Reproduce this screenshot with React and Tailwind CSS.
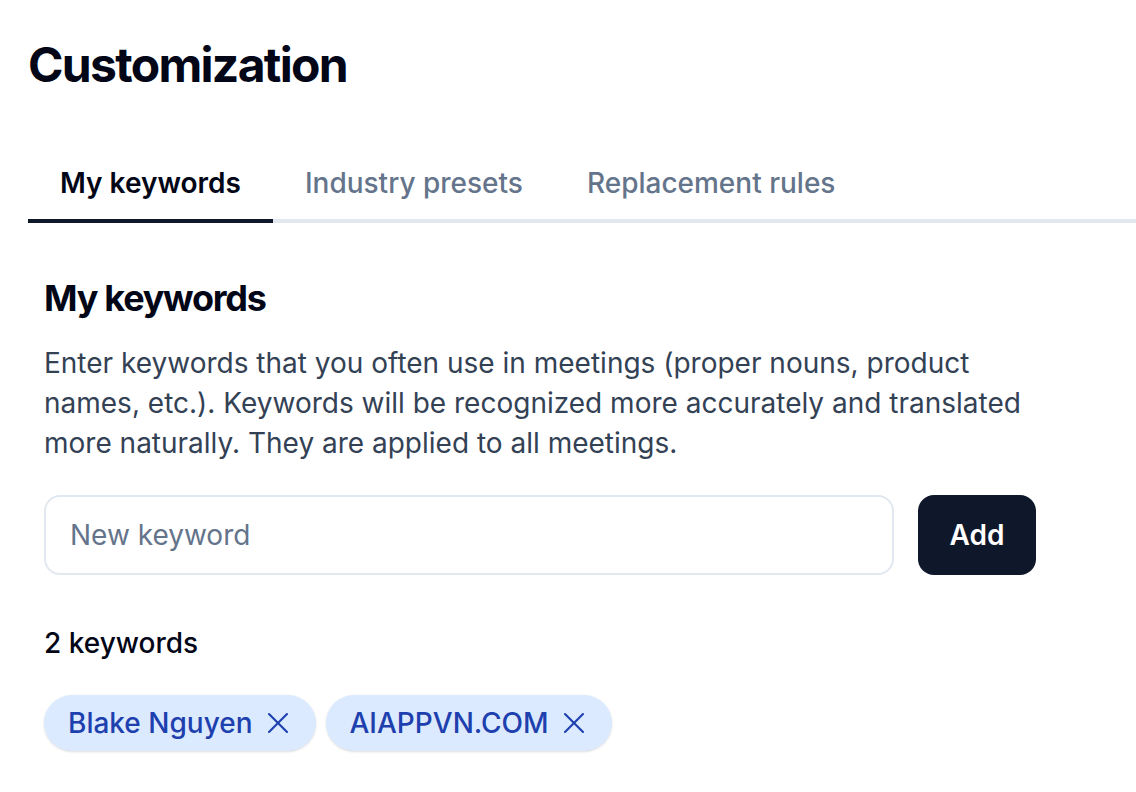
import { X } from "lucide-react";

const tabs = ["My keywords", "Industry presets", "Replacement rules"];
const keywords = ["Blake Nguyen", "AIAPPVN.COM"];

export default function App() {
  return (
    <div
      className="min-h-screen bg-white pl-[28px] pt-[41px]"
      style={{ fontFamily: "Inter, 'Noto Sans', sans-serif" }}
    >
      <h1 className="text-[48px] font-bold leading-[48px] tracking-[-0.035em] text-[#020617]">
        Customization
      </h1>

      {/* Tabs */}
      <div className="mt-[58px] flex border-b-4 border-[#e2e8f0]">
        {tabs.map((tab, i) => (
          <button
            key={tab}
            className={
              i === 0
                ? "-mb-1 border-b-4 border-[#0f172a] px-8 pt-4 pb-4 text-[28px] font-semibold leading-[40px] text-[#020617]"
                : "-mb-1 border-b-4 border-transparent px-8 pt-4 pb-4 text-[28px] font-medium leading-[40px] text-[#64748b]"
            }
          >
            {tab}
          </button>
        ))}
      </div>

      {/* Section */}
      <div className="w-[1008px] pl-4 pt-[55px]">
        <h2 className="text-[36px] font-bold leading-[40px] tracking-[-0.035em] text-[#020617]">
          My keywords
        </h2>
        <p className="mt-[25px] text-[28px] leading-[40px] text-[#334155]">
          Enter keywords that you often use in meetings (proper nouns, product
          names, etc.). Keywords will be recognized more accurately and
          translated more naturally. They are applied to all meetings.
        </p>

        <div className="mt-8 flex gap-6">
          <input
            type="text"
            placeholder="New keyword"
            className="h-[80px] flex-1 rounded-2xl border-2 border-[#e2e8f0] px-6 text-[28px] text-[#0f172a] outline-none placeholder:text-[#64748b]"
          />
          <button className="h-[80px] w-[118px] rounded-2xl bg-[#0f172a] text-[28px] font-semibold text-white">
            Add
          </button>
        </div>

        <div className="mt-12 text-[28px] font-medium leading-[40px] text-[#020617]">
          {keywords.length} keywords
        </div>

        <div className="mt-8 flex flex-wrap gap-[10px]">
          {keywords.map((k) => (
            <span
              key={k}
              className="flex h-[56px] items-center gap-[7px] rounded-full bg-[#dbeafe] pl-6 pr-[20px] text-[28px] font-medium text-[#1e40af] shadow-sm"
            >
              {k}
              <X size={36} strokeWidth={1.4} />
            </span>
          ))}
        </div>
      </div>
    </div>
  );
}
